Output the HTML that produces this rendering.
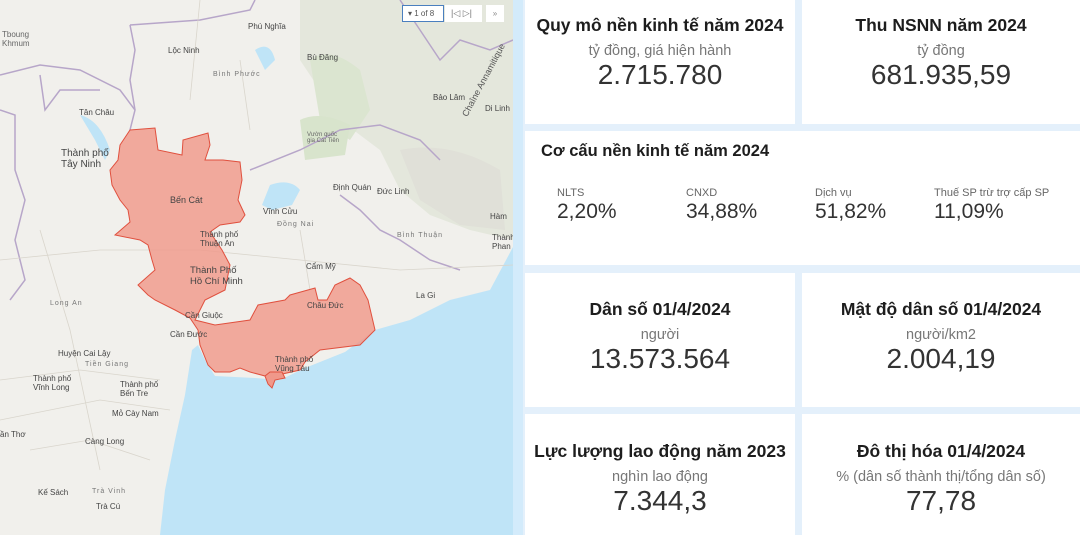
<!DOCTYPE html>
<html><head><meta charset="utf-8"><style>
*{margin:0;padding:0;box-sizing:border-box}
body{width:1080px;height:535px;overflow:hidden;background:#e4f0fb;font-family:"Liberation Sans",Arial,sans-serif;position:relative}
#map{position:absolute;left:0;top:0;width:513px;height:535px;overflow:hidden;background:#f0f0ec}
#strip{position:absolute;left:513px;top:0;width:10px;height:535px;background:#d3ebfb}
.card{position:absolute;background:#fff;text-align:center;color:#222}
.t{font-weight:bold;font-size:17.5px;color:#1d1d1d;white-space:nowrap}
.u{font-size:14.5px;color:#777;margin-top:7px}
.v{font-size:28px;color:#333;margin-top:0px}
.ml{position:absolute;font-size:8px;color:#444;white-space:nowrap}
.mg{position:absolute;font-size:7px;color:#777;letter-spacing:1px;white-space:nowrap}
.s{position:absolute;top:0}
.s .a{font-size:11px;color:#666}
.s .b{font-size:21px;color:#333;margin-top:1px}
</style></head><body>
<div id="map">
<svg width="513" height="535" viewBox="0 0 513 535" style="position:absolute;left:0;top:0">
<rect width="513" height="535" fill="#f1f0ec"/>
<path d="M300 0 L513 0 L513 240 L470 230 L430 215 L400 190 L380 150 L340 120 L300 60 Z" fill="#e4e7dc"/>
<path d="M310 60 Q330 45 360 70 L370 110 L350 140 L320 120 Z" fill="#dbe5d0"/>
<path d="M300 120 Q320 110 350 125 L345 155 L305 160 Z" fill="#d8e4cc"/>
<path d="M400 150 Q450 140 500 170 L505 230 L460 225 L420 200 Z" fill="#e0e0d8"/>
<path d="M513 247 L490 290 L450 300 L410 320 L375 330 L345 352 L305 368 L280 380 L255 378 L215 376 L205 360 L198 345 L192 350 L185 395 L175 440 L165 490 L160 535 L513 535 Z" fill="#bfe4f7"/>
<path d="M270 185 Q290 178 300 190 L292 205 L272 210 L262 205 Z" fill="#bfe4f7"/>
<path d="M255 50 Q270 40 275 60 L265 70 Z" fill="#bfe4f7"/>
<path d="M80 115 Q100 120 110 150 L105 160 L95 140 Z" fill="#bfe4f7"/>
<g fill="none" stroke="#b7a6c9" stroke-width="1.5">
<path d="M0 75 L40 65 L80 70 L120 90 L135 110 L130 130"/>
<path d="M130 25 L200 20 L250 10 L255 0"/>
<path d="M130 25 L135 50 L130 80 L135 110"/>
<path d="M0 110 L15 115 L15 170 L25 200 L15 240 L25 280 L10 300"/>
<path d="M40 75 L45 110 L60 90 L100 90"/>
<path d="M250 170 L300 150 L340 130 L380 125 L420 140 L440 160"/>
<path d="M400 0 L420 30 L440 60 L460 40 L490 50 L513 40"/>
<path d="M340 195 L360 210 L380 230 L400 240 L430 260 L460 270"/>
</g>
<g fill="none" stroke="#d9d5cc" stroke-width="0.8">
<path d="M0 260 L100 250 L200 250 L300 260 L400 270 L513 265"/>
<path d="M0 380 L80 370 L160 380"/><path d="M0 420 L100 400 L170 410"/>
<path d="M30 450 L90 440 L150 460"/><path d="M200 0 L190 100"/><path d="M240 60 L250 130"/>
<path d="M40 230 L70 330 L100 470"/><path d="M300 230 L310 290"/>
</g>
<path d="M130 130 L155 128 L158 150 L182 155 L183 140 L208 133 L210 145 L205 160 L223 160 L240 162 L242 180 L238 200 L245 215 L240 222 L220 225 L210 232 L222 250 L230 265 L225 290 L205 300 L200 310 L195 320 L215 325 L250 320 L258 305 L285 300 L290 295 L315 288 L318 300 L327 300 L335 285 L350 278 L360 285 L368 300 L375 330 L360 345 L320 350 L305 362 L300 370 L278 375 L270 382 L265 376 L250 372 L240 368 L230 372 L215 372 L208 365 L200 345 L198 330 L190 318 L175 310 L155 300 L148 295 L138 285 L155 270 L152 260 L148 245 L140 240 L115 235 L130 222 L128 210 L120 200 L112 185 L110 170 L118 160 L120 145 Z" fill="#f0988a" fill-opacity="0.82" stroke="#e0503e" stroke-width="1"/>
<path d="M265 376 L270 372 L282 372 L285 378 L275 380 L272 388 L268 384 Z" fill="#f0988a" stroke="#e0503e"/>
</svg>
<div class="ml" style="left:248px;top:22px">Phú Nghĩa</div>
<div class="ml" style="left:168px;top:46px">Lộc Ninh</div>
<div class="ml" style="left:307px;top:53px">Bù Đăng</div>
<div class="mg" style="left:213px;top:71px">Bình Phước</div>
<div class="ml" style="left:2px;top:30px;color:#666">Tboung<br>Khmum</div>
<div class="ml" style="left:79px;top:108px">Tân Châu</div>
<div class="ml" style="left:61px;top:148px;font-size:10px">Thành phố<br>Tây Ninh</div>
<div class="ml" style="left:433px;top:93px">Bảo Lâm</div>
<div class="ml" style="left:485px;top:104px">Di Linh</div>
<div class="ml" style="left:307px;top:132px;font-size:6px;color:#666">Vườn quốc<br>gia Cát Tiên</div>
<div class="ml" style="left:170px;top:195px;font-size:9px">Bến Cát</div>
<div class="ml" style="left:333px;top:183px">Định Quán</div>
<div class="ml" style="left:377px;top:187px">Đức Linh</div>
<div class="ml" style="left:263px;top:207px">Vĩnh Cửu</div>
<div class="mg" style="left:277px;top:221px">Đồng Nai</div>
<div class="ml" style="left:200px;top:230px">Thành phố<br>Thuận An</div>
<div class="mg" style="left:397px;top:232px">Bình Thuận</div>
<div class="ml" style="left:190px;top:265px;font-size:9.5px">Thành Phố<br>Hồ Chí Minh</div>
<div class="ml" style="left:306px;top:262px">Cẩm Mỹ</div>
<div class="ml" style="left:416px;top:291px">La Gi</div>
<div class="mg" style="left:50px;top:300px">Long An</div>
<div class="ml" style="left:307px;top:301px">Châu Đức</div>
<div class="ml" style="left:185px;top:311px">Cần Giuộc</div>
<div class="ml" style="left:170px;top:330px">Cần Đước</div>
<div class="ml" style="left:58px;top:349px">Huyện Cai Lậy</div>
<div class="mg" style="left:85px;top:361px">Tiền Giang</div>
<div class="ml" style="left:275px;top:355px">Thành phố<br>Vũng Tàu</div>
<div class="ml" style="left:33px;top:374px">Thành phố<br>Vĩnh Long</div>
<div class="ml" style="left:120px;top:380px">Thành phố<br>Bến Tre</div>
<div class="ml" style="left:112px;top:409px">Mỏ Cày Nam</div>
<div class="ml" style="left:0px;top:430px">ần Thơ</div>
<div class="ml" style="left:85px;top:437px">Càng Long</div>
<div class="ml" style="left:38px;top:488px">Kế Sách</div>
<div class="mg" style="left:92px;top:488px">Trà Vinh</div>
<div class="ml" style="left:96px;top:502px">Trà Cú</div>
<div class="ml" style="left:490px;top:212px">Hàm</div>
<div class="ml" style="left:492px;top:233px">Thành<br>Phan</div>
<div class="ml" style="left:443px;top:75px;transform:rotate(-62deg);font-size:9px;color:#555">Chaîne Annamitique</div>
<div style="position:absolute;left:402px;top:5px;width:42px;height:17px;border:1px solid #4a7fbf;background:#fff;font-size:8px;color:#555;line-height:15px;padding-left:5px">&#9662; 1 of 8</div>
<div style="position:absolute;left:445px;top:5px;width:37px;height:17px;background:#fff;font-size:9px;color:#777;line-height:17px;padding-left:6px">|◁ ▷|</div>
<div style="position:absolute;left:486px;top:5px;width:18px;height:17px;background:#fff;font-size:8px;color:#888;line-height:17px;text-align:center">»</div>
</div>
<div id="strip"></div>

<div class="card" style="left:525px;top:0;width:270px;height:124px;padding-top:15px">
<div class="t">Quy mô nền kinh tế năm 2024</div><div class="u">tỷ đồng, giá hiện hành</div><div class="v">2.715.780</div></div>
<div class="card" style="left:802px;top:0;width:278px;height:124px;padding-top:15px">
<div class="t">Thu NSNN năm 2024</div><div class="u">tỷ đồng</div><div class="v">681.935,59</div></div>
<div class="card" style="left:525px;top:131px;width:555px;height:134px;text-align:left">
<div class="t" style="position:absolute;left:16px;top:11px;font-size:16.5px">Cơ cấu nền kinh tế năm 2024</div>
<div class="s" style="left:32px;top:56px"><div class="a">NLTS</div><div class="b">2,20%</div></div>
<div class="s" style="left:161px;top:56px"><div class="a">CNXD</div><div class="b">34,88%</div></div>
<div class="s" style="left:290px;top:56px"><div class="a">Dịch vụ</div><div class="b">51,82%</div></div>
<div class="s" style="left:409px;top:56px"><div class="a">Thuế SP trừ trợ cấp SP</div><div class="b">11,09%</div></div>
</div>
<div class="card" style="left:525px;top:273px;width:270px;height:134px;padding-top:26px">
<div class="t">Dân số 01/4/2024</div><div class="u">người</div><div class="v">13.573.564</div></div>
<div class="card" style="left:802px;top:273px;width:278px;height:134px;padding-top:26px">
<div class="t">Mật độ dân số 01/4/2024</div><div class="u">người/km2</div><div class="v">2.004,19</div></div>
<div class="card" style="left:525px;top:414px;width:270px;height:121px;padding-top:27px">
<div class="t">Lực lượng lao động năm 2023</div><div class="u">nghìn lao động</div><div class="v">7.344,3</div></div>
<div class="card" style="left:802px;top:414px;width:278px;height:121px;padding-top:27px">
<div class="t">Đô thị hóa 01/4/2024</div><div class="u">% (dân số thành thị/tổng dân số)</div><div class="v">77,78</div></div>
</body></html>
